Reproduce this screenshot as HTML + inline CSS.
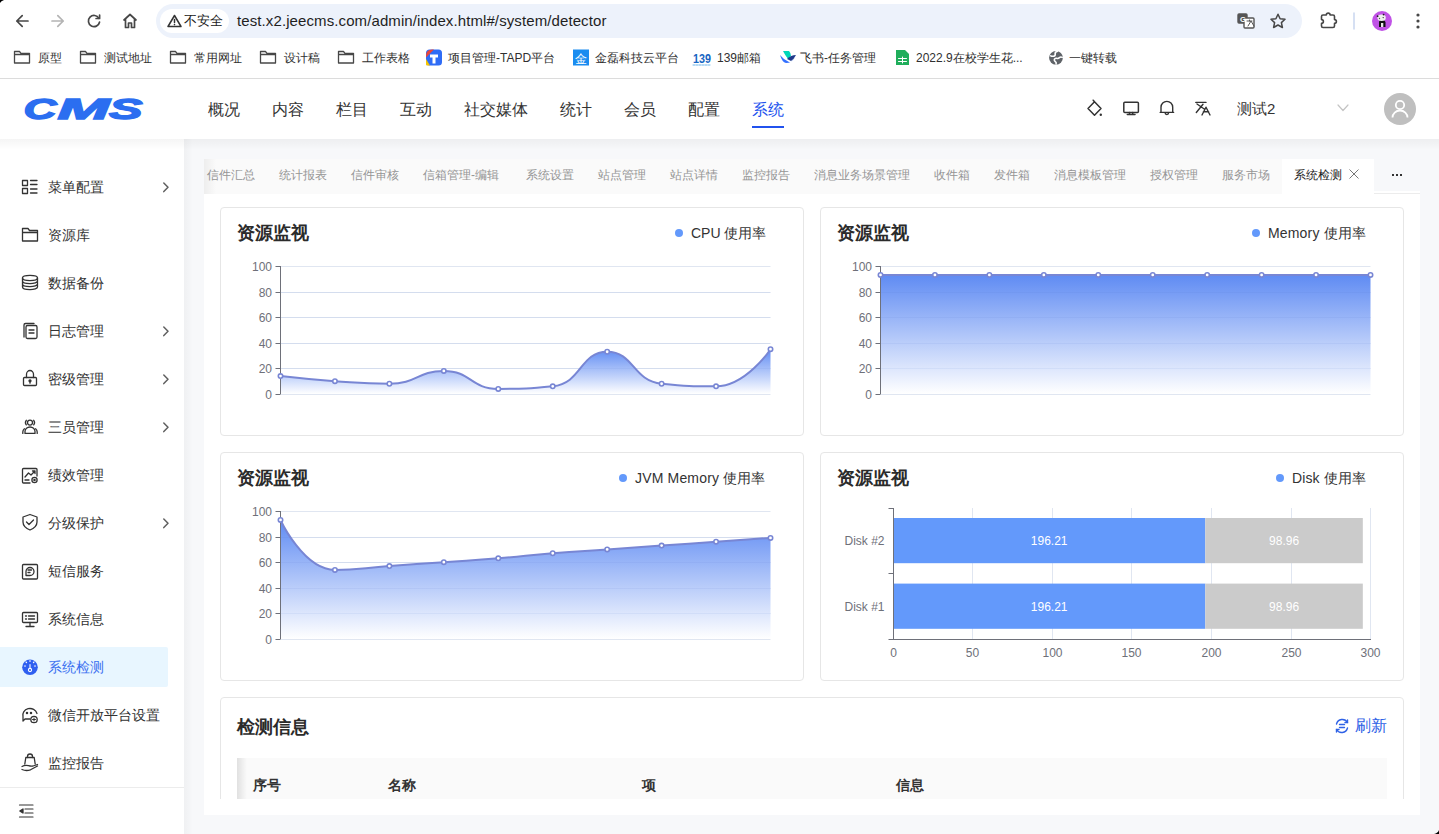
<!DOCTYPE html>
<html><head><meta charset="utf-8"><title>CMS</title>
<style>
*{box-sizing:border-box;margin:0;padding:0}
html,body{width:1439px;height:834px;overflow:hidden}
body{position:relative;background:#f7f8fa;font-family:"Liberation Sans",sans-serif;color:#333}
.a{position:absolute}
.t{position:absolute;white-space:nowrap;line-height:1}
svg{position:absolute;overflow:visible}
.c{display:inline-block;width:1em;text-align:center}
/* browser */
#tb{left:0;top:0;width:1439px;height:78px;background:#fff}
#omni{left:156px;top:4px;width:1146px;height:34px;border-radius:17px;background:#edf2fb}
#chip{left:160px;top:9px;width:69px;height:24px;border-radius:12px;background:#fff}
.bm{font-size:12px;color:#303030;top:52px}
#sep{left:0;top:78px;width:1439px;height:1px;background:#dcdcdc}
/* header */
#hd{left:0;top:79px;width:1439px;height:60px;background:#fff}
.nav{font-size:16px;color:#333;top:102px}
/* sidebar */
#sb{left:0;top:139px;width:184px;height:695px;background:#fff}
.mi{font-size:14px;color:#333;left:48px}
.chev{left:161px}
/* content */
#tabs{left:204px;top:159px;width:1078px;height:35px;background:#fafafa}
.tab{font-size:12px;color:#959595;top:169px}
#panel{left:204px;top:191px;width:1216px;height:624px;background:#fff}
.card{position:absolute;background:#fff;border:1px solid #e6e6e6;border-radius:4px}
.ctitle{font-size:18px;font-weight:bold;color:#2b2b2b;left:16px;top:16px}
.leg{font-size:14px;color:#333}
.ax{font-size:12px;fill:#6e7079;font-family:"Liberation Sans",sans-serif}
</style></head>
<body>
<!-- ============ BROWSER CHROME ============ -->
<div id="tb" class="a"></div>
<div id="omni" class="a"></div>
<div id="chip" class="a"></div>
<svg width="1439" height="78" style="left:0;top:0" fill="none" stroke-linecap="round" stroke-linejoin="round">
 <g stroke="#474747" stroke-width="1.7">
  <path d="M16.8,21 H28 M22.2,15.6 L16.8,21 L22.2,26.4"/>
 </g>
 <g stroke="#b4b4b4" stroke-width="1.7"><path d="M52,21 H63.2 M57.8,15.6 L63.2,21 L57.8,26.4"/></g>
 <g stroke="#474747" stroke-width="1.7">
  <path d="M98.9,18.3 A5.6,5.6 0 1 0 99.5,22.2"/>
  <path d="M99.6,15 V18.5 H96.1" />
  <path d="M124,20 L130,14.5 L136,20 M125.5,18.8 V27.5 H128.5 V23 H131.5 V27.5 H134.5 V18.8"/>
 </g>
 <g stroke="#333" stroke-width="1.5"><path d="M174.5,15.5 L181,26.5 H168 Z"/><path d="M174.5,19.5 V22.5"/></g>
 <circle cx="174.5" cy="24.6" r="0.8" fill="#333"/>
 <!-- translate icon -->
 <g stroke="#555" stroke-width="1.4"><rect x="1238" y="14" width="9" height="9" rx="1" fill="#555"/><rect x="1244" y="18" width="10" height="10" rx="1" fill="#fff"/></g>
 <text x="1240" y="21.5" font-size="7.5" fill="#fff" font-family="Liberation Sans" font-weight="bold">G</text>
 <path d="M1247,21 h5 M1249.5,20 v1 M1248,26 l3,-5 l3,5" stroke="#555" stroke-width="1" />
 <!-- star -->
 <path d="M1278,14.3 L1280.1,18.8 L1285,19.3 L1281.4,22.6 L1282.4,27.5 L1278,25 L1273.6,27.5 L1274.6,22.6 L1271,19.3 L1275.9,18.8 Z" stroke="#474747" stroke-width="1.5"/>
 <!-- puzzle -->
 <path d="M1321.5,16.5 a1.5,1.5 0 0 1 1.5,-1.5 H1326.3 a1.9,1.9 0 0 1 3.8,0 H1333 a1.5,1.5 0 0 1 1.5,1.5 V19.6 a1.9,1.9 0 0 1 0,3.8 V26 a1.5,1.5 0 0 1 -1.5,1.5 H1323 a1.5,1.5 0 0 1 -1.5,-1.5 V23.4 a1.9,1.9 0 0 0 0,-3.8 Z" stroke="#474747" stroke-width="1.6"/>
 <path d="M1354,13 V29" stroke="#c9d6ef" stroke-width="1.5"/>
 <circle cx="1382" cy="21" r="10" fill="#c052e6"/>
 <path d="M1379,27 v-5 q0,-2 3,-2.3 q3,0.3 3.5,2.3 v5 z" fill="#111"/>
 <path d="M1381,27 v-4 h2.3 v4 z" fill="#e8e8e8"/>
 <ellipse cx="1381.6" cy="17.8" rx="4.2" ry="3.2" fill="#eef2ee"/>
 <circle cx="1377.6" cy="16.2" r="0.9" fill="#222"/><circle cx="1383.6" cy="14.6" r="0.9" fill="#222"/>
 <circle cx="1379.5" cy="18.5" r="0.7" fill="#555"/><circle cx="1383.2" cy="17.6" r="0.7" fill="#333"/>
 <g fill="#474747"><circle cx="1418" cy="15" r="1.6"/><circle cx="1418" cy="21" r="1.6"/><circle cx="1418" cy="27" r="1.6"/></g>
 <!-- bookmark folders -->
 <g stroke="#474747" stroke-width="1.3">
  <path d="M14.5,51.5 h5 l1.5,1.8 h8.5 v9.7 h-15 z M14.5,54.5 h15"/>
  <path d="M80.5,51.5 h5 l1.5,1.8 h8.5 v9.7 h-15 z M80.5,54.5 h15"/>
  <path d="M170.5,51.5 h5 l1.5,1.8 h8.5 v9.7 h-15 z M170.5,54.5 h15"/>
  <path d="M260.5,51.5 h5 l1.5,1.8 h8.5 v9.7 h-15 z M260.5,54.5 h15"/>
  <path d="M338.5,51.5 h5 l1.5,1.8 h8.5 v9.7 h-15 z M338.5,54.5 h15"/>
 </g>
 <!-- TAPD -->
 <rect x="426" y="49.5" width="16" height="16" rx="3.5" fill="#2f6cf6"/>
 <path d="M426,62 v-3 l4,6.5 h-3 a1,1 0 0 1 -1,-1z" fill="#f5c400"/>
 <path d="M426,56 q0,-6.5 6,-6.5 h2 l-8,8z" fill="#e8453c"/>
 <path d="M430,54.5 h8 v3 h-2.5 v6 h-3 v-6 h-2.5z" fill="#fff" stroke="none"/>
 <!-- jin -->
 <rect x="573" y="49.5" width="16" height="16" fill="#1a8cf0"/>
 <text x="575" y="62.5" font-size="12" fill="#fff">金</text>
 <!-- 139 -->
 <text x="693" y="63" font-size="12" font-weight="bold" fill="#1765c2" font-family="Liberation Sans" textLength="18" lengthAdjust="spacingAndGlyphs">139</text>
 <path d="M693,65 h18" stroke="#6fb5e9" stroke-width="1" stroke-dasharray="2,1"/>
 <!-- feishu -->
 <path d="M780,55 q4,5 9,7 q4,0 6,-5 q-3,6 -9,6 q-4,-1 -6,-8z" fill="#3370ff"/>
 <path d="M783,51 h6 q2,2 2,5 l-3,3 q-3,-4 -5,-8z" fill="#00d6b9"/>
 <path d="M787,59 q4,-4 9,-4 q-2,4 -5,6z" fill="#1e3a8a"/>
 <!-- sheets -->
 <path d="M896,50 h9 l4,4 v11 h-13z" fill="#1fae5b"/>
 <path d="M898.5,58.5 h8 M898.5,61.5 h8 M902.5,57 v6" stroke="#fff" stroke-width="1"/>
 <!-- globe -->
 <circle cx="1056" cy="57.8" r="6.9" fill="#5f6368"/>
 <path d="M1057.5,51.3 q-2.8,0.8 -2.3,2.8 q0.4,1.6 -1.6,2.1 q-2,0.3 -2.8,-0.4 M1062.2,57.4 q-1.5,-0.9 -2.8,0.2 q-1.2,1.3 -2.8,0.7 q-1.6,-0.4 -2.2,1 q-0.4,1.4 0.8,2.2 q1.4,0.8 0.9,2.4" stroke="#fff" stroke-width="1.6" fill="none"/>
</svg>
<div class="t" style="left:184px;top:14px;font-size:13px;color:#222"><span class="c">不</span><span class="c">安</span><span class="c">全</span></div>
<div class="t" style="left:237px;top:13px;font-size:15px;color:#1f1f1f;letter-spacing:0.1px">test.x2.jeecms.com/admin/index.html#/system/detector</div>
<div class="t bm" style="left:38px"><span class="c">原</span><span class="c">型</span></div>
<div class="t bm" style="left:104px"><span class="c">测</span><span class="c">试</span><span class="c">地</span><span class="c">址</span></div>
<div class="t bm" style="left:194px"><span class="c">常</span><span class="c">用</span><span class="c">网</span><span class="c">址</span></div>
<div class="t bm" style="left:284px"><span class="c">设</span><span class="c">计</span><span class="c">稿</span></div>
<div class="t bm" style="left:362px"><span class="c">工</span><span class="c">作</span><span class="c">表</span><span class="c">格</span></div>
<div class="t bm" style="left:448px"><span class="c">项</span><span class="c">目</span><span class="c">管</span><span class="c">理</span>-TAPD<span class="c">平</span><span class="c">台</span></div>
<div class="t bm" style="left:595px"><span class="c">金</span><span class="c">磊</span><span class="c">科</span><span class="c">技</span><span class="c">云</span><span class="c">平</span><span class="c">台</span></div>
<div class="t bm" style="left:717px">139<span class="c">邮</span><span class="c">箱</span></div>
<div class="t bm" style="left:800px"><span class="c">飞</span><span class="c">书</span>-<span class="c">任</span><span class="c">务</span><span class="c">管</span><span class="c">理</span></div>
<div class="t bm" style="left:916px">2022.9<span class="c">在</span><span class="c">校</span><span class="c">学</span><span class="c">生</span><span class="c">花</span>...</div>
<div class="t bm" style="left:1069px"><span class="c">一</span><span class="c">键</span><span class="c">转</span><span class="c">载</span></div>
<div id="sep" class="a"></div>

<!-- ============ APP HEADER ============ -->
<div id="hd" class="a"></div>
<svg width="140" height="40" style="left:1px;top:89px">
 <g font-family="Liberation Sans" font-weight="bold" font-style="italic" font-size="30" fill="#2b6ef0" stroke="#2b6ef0" stroke-width="1.4">
 <text x="22.5" y="30" textLength="33" lengthAdjust="spacingAndGlyphs">C</text>
 <text x="56.5" y="30" textLength="52" lengthAdjust="spacingAndGlyphs">M</text>
 <text x="108" y="30" textLength="33.5" lengthAdjust="spacingAndGlyphs">S</text>
 </g>
</svg>
<div class="t nav" style="left:208px"><span class="c">概</span><span class="c">况</span></div>
<div class="t nav" style="left:272px"><span class="c">内</span><span class="c">容</span></div>
<div class="t nav" style="left:336px"><span class="c">栏</span><span class="c">目</span></div>
<div class="t nav" style="left:400px"><span class="c">互</span><span class="c">动</span></div>
<div class="t nav" style="left:464px"><span class="c">社</span><span class="c">交</span><span class="c">媒</span><span class="c">体</span></div>
<div class="t nav" style="left:560px"><span class="c">统</span><span class="c">计</span></div>
<div class="t nav" style="left:624px"><span class="c">会</span><span class="c">员</span></div>
<div class="t nav" style="left:688px"><span class="c">配</span><span class="c">置</span></div>
<div class="t nav" style="left:752px;color:#2152ee"><span class="c">系</span><span class="c">统</span></div>
<div class="a" style="left:752px;top:126px;width:32px;height:2px;background:#2152ee"></div>
<svg width="1439" height="60" style="left:0;top:79px" fill="none" stroke="#333" stroke-width="1.5" stroke-linejoin="round" stroke-linecap="round">
 <!-- paint bucket -->
 <path d="M1094.5,22.8 L1101,29.6 L1094.5,36.3 L1088,29.6 Z M1094.5,22.8 L1093.2,21.2"/>
 <circle cx="1100.8" cy="35.8" r="1.2" fill="#333" stroke="none"/>
 <!-- monitor -->
 <rect x="1123.8" y="23.2" width="14.6" height="10.2" rx="1"/>
 <path d="M1129.5,33.5 V35.3 M1132.7,33.5 V35.3 M1127.3,35.6 H1135"/>
 <!-- bell -->
 <path d="M1161,33.4 V28.2 a5.85,5.85 0 0 1 11.7,0 V33.4 M1160.2,33.4 H1173.6 M1165.1,33.8 a1.75,1.75 0 0 0 3.5,0" stroke-width="1.4"/>
 <!-- translate -->
 <path d="M1195.8,23.4 H1206 M1197,25 L1204.6,30.3 M1203,25.3 L1196.3,33.5 M1202,36 L1206,28.2 L1210,36 M1203.4,32.8 H1208.6" stroke-width="1.4"/>
 <!-- chevron -->
 <path d="M1338,26 L1343,31.5 L1348,26" stroke="#c4c4c4" stroke-width="1.2"/>
</svg>
<div class="t" style="left:1237px;top:101px;font-size:15px;color:#333"><span class="c">测</span><span class="c">试</span>2</div>
<div class="a" style="left:1384px;top:93px;width:32px;height:32px;border-radius:16px;background:#bfbfbf"></div>
<svg width="32" height="32" style="left:1384px;top:93px" fill="none" stroke="#fff" stroke-width="1.8">
 <circle cx="16" cy="12" r="4.2"/>
 <path d="M8.5,24.5 a7.5,7 0 0 1 15,0"/>
</svg>

<!-- ============ SIDEBAR ============ -->
<div id="sb" class="a"></div>
<div class="a" style="left:0;top:647px;width:168px;height:40px;background:#e8f6ff;border-radius:0 2px 2px 0"></div>
<div class="t mi" style="top:180px"><span class="c">菜</span><span class="c">单</span><span class="c">配</span><span class="c">置</span></div>
<div class="t mi" style="top:228px"><span class="c">资</span><span class="c">源</span><span class="c">库</span></div>
<div class="t mi" style="top:276px"><span class="c">数</span><span class="c">据</span><span class="c">备</span><span class="c">份</span></div>
<div class="t mi" style="top:324px"><span class="c">日</span><span class="c">志</span><span class="c">管</span><span class="c">理</span></div>
<div class="t mi" style="top:372px"><span class="c">密</span><span class="c">级</span><span class="c">管</span><span class="c">理</span></div>
<div class="t mi" style="top:420px"><span class="c">三</span><span class="c">员</span><span class="c">管</span><span class="c">理</span></div>
<div class="t mi" style="top:468px"><span class="c">绩</span><span class="c">效</span><span class="c">管</span><span class="c">理</span></div>
<div class="t mi" style="top:516px"><span class="c">分</span><span class="c">级</span><span class="c">保</span><span class="c">护</span></div>
<div class="t mi" style="top:564px"><span class="c">短</span><span class="c">信</span><span class="c">服</span><span class="c">务</span></div>
<div class="t mi" style="top:612px"><span class="c">系</span><span class="c">统</span><span class="c">信</span><span class="c">息</span></div>
<div class="t mi" style="top:660px;color:#3a6ff0"><span class="c">系</span><span class="c">统</span><span class="c">检</span><span class="c">测</span></div>
<div class="t mi" style="top:708px"><span class="c">微</span><span class="c">信</span><span class="c">开</span><span class="c">放</span><span class="c">平</span><span class="c">台</span><span class="c">设</span><span class="c">置</span></div>
<div class="t mi" style="top:756px"><span class="c">监</span><span class="c">控</span><span class="c">报</span><span class="c">告</span></div>
<div class="a" style="left:0;top:787px;width:184px;height:1px;background:#ececec"></div>
<svg width="184" height="695" style="left:0;top:139px" fill="none" stroke="#333" stroke-width="1.3" stroke-linejoin="round" stroke-linecap="round">
 <!-- chevrons -->
 <g stroke="#606060" stroke-width="1.5">
  <path d="M163.8,44 L168,48.3 L163.8,52.6"/>
  <path d="M163.8,188 L168,192.3 L163.8,196.6"/>
  <path d="M163.8,236 L168,240.3 L163.8,244.6"/>
  <path d="M163.8,284 L168,288.3 L163.8,292.6"/>
  <path d="M163.8,380 L168,384.3 L163.8,388.6"/>
 </g>
 <!-- menu config: y 41-55 -->
 <rect x="22.5" y="41.5" width="5" height="5"/><rect x="22.5" y="49.5" width="5" height="5"/>
 <path d="M30.5,41.5 H37 M30.5,45.5 H37 M30.5,50 H37 M30.5,54 H37"/>
 <!-- folder: y 89-102 -->
 <path d="M22.5,89.5 H28 L29.5,91.5 H37.5 V102 H22.5 Z M22.5,93.5 H37.5"/>
 <!-- database: y 136-151 -->
 <ellipse cx="30" cy="139" rx="7.5" ry="2.6"/>
 <path d="M22.5,139 V148 a7.5,2.6 0 0 0 15,0 V139 M22.5,142 a7.5,2.6 0 0 0 15,0 M22.5,145 a7.5,2.6 0 0 0 15,0"/>
 <!-- log stacked docs: y 184-199 -->
 <path d="M24,198 V186 a1.5,1.5 0 0 1 1.5,-1.5 H34"/>
 <rect x="26" y="186.5" width="11" height="13" rx="1.5"/>
 <path d="M29,191 H34 M29,194 H34"/>
 <!-- lock -->
 <path d="M26.5,238.5 V235.2 a3.5,3.7 0 0 1 7,0 V238.5"/>
 <rect x="23.5" y="238.5" width="13" height="8" rx="1"/>
 <circle cx="30" cy="241.8" r="1" fill="#333"/><path d="M30,242.3 V244.2"/>
 <!-- users -->
 <circle cx="30" cy="283.6" r="2.5"/>
 <path d="M25,294.4 V292.6 a5,4.6 0 0 1 10,0 V294.4 Z"/>
 <path d="M26.3,281.3 q-1.8,2.3 0,4.6 M33.7,281.3 q1.8,2.3 0,4.6 M22.8,294.4 V293 q0,-2 1.6,-3.2 M37.2,294.4 V293 q0,-2 -1.6,-3.2"/>
 <!-- performance: y 329-344 -->
 <path d="M37,337 V330.5 a1,1 0 0 0 -1,-1 H23.5 a1,1 0 0 0 -1,1 V343 a1,1 0 0 0 1,1 H30"/>
 <path d="M25,338 L28.5,334 L31,336 L35,332 M32.5,332 H35 V334.5 M25,341 H29"/>
 <circle cx="34.5" cy="341" r="2.6"/><circle cx="34.5" cy="341" r="0.6" fill="#333"/>
 <!-- shield: y 377-393 -->
 <path d="M30,375.5 L37,378 V383 q0,5 -7,8 q-7,-3 -7,-8 V378 Z"/>
 <path d="M26.5,383 L29,385.5 L33.5,381"/>
 <!-- sms: y 425-440 -->
 <rect x="22.5" y="425.5" width="15" height="14.5" rx="1"/>
 <path d="M26,436.5 V432.5 a4,4 0 1 1 4,4 Z M28,431 H31.5 M28,433.5 H30"/>
 <!-- system info: y 473-488 -->
 <rect x="22.5" y="473.5" width="15" height="10" rx="1"/>
 <path d="M30,483.5 V486.5 M26,487.5 H34 M25.5,477 H26.5 M25.5,480 H26.5 M28.5,477 H34.5 M28.5,480 H34.5"/>
 <!-- detector active: y 520-536 -->
 <circle cx="30" cy="528.3" r="7.8" fill="#2f5ff0" stroke="none"/>
 <g stroke="#fff" stroke-width="1.1"><circle cx="30" cy="531" r="1.6"/><path d="M30,529.5 V525.5 M30,521.5 V522.5 M24.5,527 H25.5 M34.5,527 H35.5 M26,523 L26.6,523.6 M34,523 L33.4,523.6"/></g>
 <!-- wechat: y 568-584 -->
 <path d="M30,580 H25 L23,582 V578 a7,6.5 0 1 1 14,-3.5"/>
 <circle cx="27" cy="574" r="0.6" fill="#333"/><circle cx="31" cy="574" r="0.6" fill="#333"/>
 <circle cx="34" cy="580.5" r="3.2"/><path d="M34,579 V582 M32.5,580.5 H35.5" stroke-width="1"/>
 <!-- monitor report -->
 <path d="M24.8,625 L25.8,618.5 H34.2 L35.2,625"/>
 <path d="M27.5,618.5 V617.5 a2.5,2.5 0 0 1 5,0 V618.5"/>
 <path d="M22,627.5 q3,-1.8 6.5,-0.8 q2.5,0.8 4.5,0.3 l4.5,-1.5 M22,630.5 q4,1.8 8.5,0.3 l7,-3.8"/>
 <!-- collapse icon: y 665-679 -->
 <path d="M19.5,666 H33 M25,670 H33 M25,674 H33 M19.5,678 H33" stroke-width="1.2"/>
 <path d="M23,670 L19.8,672 L23,674 Z" fill="#333"/>
</svg>

<!-- ============ CONTENT ============ -->
<div id="panel" class="a"></div>
<div id="tabs" class="a"></div>
<!-- TABS_CONTENT -->
<div class="a" style="left:1282px;top:159px;width:92px;height:35px;background:#fff"></div>
<div class="a" style="left:1374px;top:193px;width:46px;height:1px;background:#ececec"></div>
<div class="t tab" style="left:207px"><span class="c">信</span><span class="c">件</span><span class="c">汇</span><span class="c">总</span></div>
<div class="t tab" style="left:279px"><span class="c">统</span><span class="c">计</span><span class="c">报</span><span class="c">表</span></div>
<div class="t tab" style="left:351px"><span class="c">信</span><span class="c">件</span><span class="c">审</span><span class="c">核</span></div>
<div class="t tab" style="left:423px"><span class="c">信</span><span class="c">箱</span><span class="c">管</span><span class="c">理</span>-<span class="c">编</span><span class="c">辑</span></div>
<div class="t tab" style="left:526px"><span class="c">系</span><span class="c">统</span><span class="c">设</span><span class="c">置</span></div>
<div class="t tab" style="left:598px"><span class="c">站</span><span class="c">点</span><span class="c">管</span><span class="c">理</span></div>
<div class="t tab" style="left:670px"><span class="c">站</span><span class="c">点</span><span class="c">详</span><span class="c">情</span></div>
<div class="t tab" style="left:742px"><span class="c">监</span><span class="c">控</span><span class="c">报</span><span class="c">告</span></div>
<div class="t tab" style="left:814px"><span class="c">消</span><span class="c">息</span><span class="c">业</span><span class="c">务</span><span class="c">场</span><span class="c">景</span><span class="c">管</span><span class="c">理</span></div>
<div class="t tab" style="left:934px"><span class="c">收</span><span class="c">件</span><span class="c">箱</span></div>
<div class="t tab" style="left:994px"><span class="c">发</span><span class="c">件</span><span class="c">箱</span></div>
<div class="t tab" style="left:1054px"><span class="c">消</span><span class="c">息</span><span class="c">模</span><span class="c">板</span><span class="c">管</span><span class="c">理</span></div>
<div class="t tab" style="left:1150px"><span class="c">授</span><span class="c">权</span><span class="c">管</span><span class="c">理</span></div>
<div class="t tab" style="left:1222px"><span class="c">服</span><span class="c">务</span><span class="c">市</span><span class="c">场</span></div>
<div class="t tab" style="left:1294px;color:#222"><span class="c">系</span><span class="c">统</span><span class="c">检</span><span class="c">测</span></div>
<div class="a" style="left:204px;top:159px;width:12px;height:35px;background:linear-gradient(90deg,rgba(0,0,0,0.05),rgba(0,0,0,0))"></div>
<svg width="1439" height="40" style="left:0;top:155px" fill="none">
 <path d="M1349.5,14.5 L1358.5,23.5 M1358.5,14.5 L1349.5,23.5" stroke="#777" stroke-width="1"/>
 <g fill="#333"><rect x="1392" y="19" width="2" height="2"/><rect x="1396" y="19" width="2" height="2"/><rect x="1400" y="19" width="2" height="2"/></g>
</svg>
<!-- cards -->
<div class="card" style="left:220px;top:207px;width:584px;height:229px"></div>
<div class="card" style="left:820px;top:207px;width:584px;height:229px"></div>
<div class="card" style="left:220px;top:452px;width:584px;height:229px"></div>
<div class="card" style="left:820px;top:452px;width:584px;height:229px"></div>
<div class="a" style="left:220px;top:697px;width:1184px;height:102px;overflow:hidden">
 <div class="card" style="left:0;top:0;width:1184px;height:300px"></div>
</div>
<div class="t" style="left:237px;top:224px;font-size:18px;font-weight:bold;color:#2b2b2b"><span class="c">资</span><span class="c">源</span><span class="c">监</span><span class="c">视</span></div>
<div class="t" style="left:837px;top:224px;font-size:18px;font-weight:bold;color:#2b2b2b"><span class="c">资</span><span class="c">源</span><span class="c">监</span><span class="c">视</span></div>
<div class="t" style="left:237px;top:469px;font-size:18px;font-weight:bold;color:#2b2b2b"><span class="c">资</span><span class="c">源</span><span class="c">监</span><span class="c">视</span></div>
<div class="t" style="left:837px;top:469px;font-size:18px;font-weight:bold;color:#2b2b2b"><span class="c">资</span><span class="c">源</span><span class="c">监</span><span class="c">视</span></div>
<div class="a" style="left:675px;top:229px;width:8px;height:8px;border-radius:4px;background:#6399fb"></div>
<div class="t leg" style="left:691px;top:226px">CPU <span class="c">使</span><span class="c">用</span><span class="c">率</span></div>
<div class="a" style="left:1252px;top:229px;width:8px;height:8px;border-radius:4px;background:#6399fb"></div>
<div class="t leg" style="left:1268px;top:226px;letter-spacing:0.17px">Memory <span class="c">使</span><span class="c">用</span><span class="c">率</span></div>
<div class="a" style="left:619px;top:474px;width:8px;height:8px;border-radius:4px;background:#6399fb"></div>
<div class="t leg" style="left:635px;top:471px;letter-spacing:0.17px">JVM Memory <span class="c">使</span><span class="c">用</span><span class="c">率</span></div>
<div class="a" style="left:1276px;top:474px;width:8px;height:8px;border-radius:4px;background:#6399fb"></div>
<div class="t leg" style="left:1292px;top:471px;letter-spacing:0.1px">Disk <span class="c">使</span><span class="c">用</span><span class="c">率</span></div>
<!-- CHARTS_START -->
<svg width="1439" height="834" style="left:0;top:0" fill="none">
<defs><linearGradient id="g1" x1="0" y1="0" x2="0" y2="1"><stop offset="0" stop-color="#5f8bf3"/><stop offset="1" stop-color="#ffffff"/></linearGradient></defs>
<path d="M280.5,394.5 H770.5" stroke="#e0e6f1" stroke-width="1"/>
<path d="M280.5,368.5 H770.5" stroke="#e0e6f1" stroke-width="1"/>
<path d="M280.5,343.5 H770.5" stroke="#e0e6f1" stroke-width="1"/>
<path d="M280.5,317.5 H770.5" stroke="#e0e6f1" stroke-width="1"/>
<path d="M280.5,292.5 H770.5" stroke="#e0e6f1" stroke-width="1"/>
<path d="M280.5,266.5 H770.5" stroke="#e0e6f1" stroke-width="1"/>
<path d="M280.50,376.08 C280.50,376.08 307.68,379.28 334.94,381.20 C362.12,383.12 362.52,383.76 389.39,383.76 C416.96,383.76 416.94,370.96 443.83,370.96 C471.39,370.96 470.37,388.88 498.28,388.88 C524.82,388.88 527.78,388.88 552.72,386.32 C582.23,383.29 579.66,351.76 607.17,351.76 C634.10,351.76 632.39,380.79 661.61,383.76 C686.83,386.32 691.41,386.32 716.06,386.32 C745.85,386.32 770.50,349.20 770.50,349.20 L770.5,394.0 L280.5,394.0 Z" fill="url(#g1)"/>
<path d="M280.5,368.5 H770.5" stroke="#5070d0" stroke-opacity="0.08" stroke-width="1"/>
<path d="M280.5,343.5 H770.5" stroke="#5070d0" stroke-opacity="0.08" stroke-width="1"/>
<path d="M280.5,317.5 H770.5" stroke="#5070d0" stroke-opacity="0.08" stroke-width="1"/>
<path d="M280.5,292.5 H770.5" stroke="#5070d0" stroke-opacity="0.08" stroke-width="1"/>
<path d="M280.5,266.0 V394.0" stroke="#6e7079" stroke-width="1"/>
<path d="M275.5,394.5 H280.5" stroke="#6e7079" stroke-width="1"/>
<text x="272.0" y="398.7" text-anchor="end" class="ax">0</text>
<path d="M275.5,368.5 H280.5" stroke="#6e7079" stroke-width="1"/>
<text x="272.0" y="372.7" text-anchor="end" class="ax">20</text>
<path d="M275.5,343.5 H280.5" stroke="#6e7079" stroke-width="1"/>
<text x="272.0" y="347.7" text-anchor="end" class="ax">40</text>
<path d="M275.5,317.5 H280.5" stroke="#6e7079" stroke-width="1"/>
<text x="272.0" y="321.7" text-anchor="end" class="ax">60</text>
<path d="M275.5,292.5 H280.5" stroke="#6e7079" stroke-width="1"/>
<text x="272.0" y="296.7" text-anchor="end" class="ax">80</text>
<path d="M275.5,266.5 H280.5" stroke="#6e7079" stroke-width="1"/>
<text x="272.0" y="270.7" text-anchor="end" class="ax">100</text>
<path d="M280.50,376.08 C280.50,376.08 307.68,379.28 334.94,381.20 C362.12,383.12 362.52,383.76 389.39,383.76 C416.96,383.76 416.94,370.96 443.83,370.96 C471.39,370.96 470.37,388.88 498.28,388.88 C524.82,388.88 527.78,388.88 552.72,386.32 C582.23,383.29 579.66,351.76 607.17,351.76 C634.10,351.76 632.39,380.79 661.61,383.76 C686.83,386.32 691.41,386.32 716.06,386.32 C745.85,386.32 770.50,349.20 770.50,349.20" fill="none" stroke="#7886d4" stroke-width="2"/>
<circle cx="280.50" cy="376.08" r="2.2" fill="#fff" stroke="#7886d4" stroke-width="1.6"/>
<circle cx="334.94" cy="381.20" r="2.2" fill="#fff" stroke="#7886d4" stroke-width="1.6"/>
<circle cx="389.39" cy="383.76" r="2.2" fill="#fff" stroke="#7886d4" stroke-width="1.6"/>
<circle cx="443.83" cy="370.96" r="2.2" fill="#fff" stroke="#7886d4" stroke-width="1.6"/>
<circle cx="498.28" cy="388.88" r="2.2" fill="#fff" stroke="#7886d4" stroke-width="1.6"/>
<circle cx="552.72" cy="386.32" r="2.2" fill="#fff" stroke="#7886d4" stroke-width="1.6"/>
<circle cx="607.17" cy="351.76" r="2.2" fill="#fff" stroke="#7886d4" stroke-width="1.6"/>
<circle cx="661.61" cy="383.76" r="2.2" fill="#fff" stroke="#7886d4" stroke-width="1.6"/>
<circle cx="716.06" cy="386.32" r="2.2" fill="#fff" stroke="#7886d4" stroke-width="1.6"/>
<circle cx="770.50" cy="349.20" r="2.2" fill="#fff" stroke="#7886d4" stroke-width="1.6"/>
<defs><linearGradient id="g2" x1="0" y1="0" x2="0" y2="1"><stop offset="0" stop-color="#5f8bf3"/><stop offset="1" stop-color="#ffffff"/></linearGradient></defs>
<path d="M880.5,394.5 H1370.5" stroke="#e0e6f1" stroke-width="1"/>
<path d="M880.5,368.5 H1370.5" stroke="#e0e6f1" stroke-width="1"/>
<path d="M880.5,343.5 H1370.5" stroke="#e0e6f1" stroke-width="1"/>
<path d="M880.5,317.5 H1370.5" stroke="#e0e6f1" stroke-width="1"/>
<path d="M880.5,292.5 H1370.5" stroke="#e0e6f1" stroke-width="1"/>
<path d="M880.5,266.5 H1370.5" stroke="#e0e6f1" stroke-width="1"/>
<path d="M880.50,274.96 C880.50,274.96 907.72,274.96 934.94,274.96 C962.17,274.96 962.17,274.96 989.39,274.96 C1016.61,274.96 1016.61,274.96 1043.83,274.96 C1071.06,274.96 1071.06,274.96 1098.28,274.96 C1125.50,274.96 1125.50,274.96 1152.72,274.96 C1179.94,274.96 1179.94,274.96 1207.17,274.96 C1234.39,274.96 1234.39,274.96 1261.61,274.96 C1288.83,274.96 1288.83,274.96 1316.06,274.96 C1343.28,274.96 1370.50,274.96 1370.50,274.96 L1370.5,394.0 L880.5,394.0 Z" fill="url(#g2)"/>
<path d="M880.5,368.5 H1370.5" stroke="#5070d0" stroke-opacity="0.08" stroke-width="1"/>
<path d="M880.5,343.5 H1370.5" stroke="#5070d0" stroke-opacity="0.08" stroke-width="1"/>
<path d="M880.5,317.5 H1370.5" stroke="#5070d0" stroke-opacity="0.08" stroke-width="1"/>
<path d="M880.5,292.5 H1370.5" stroke="#5070d0" stroke-opacity="0.08" stroke-width="1"/>
<path d="M880.5,266.0 V394.0" stroke="#6e7079" stroke-width="1"/>
<path d="M875.5,394.5 H880.5" stroke="#6e7079" stroke-width="1"/>
<text x="872.0" y="398.7" text-anchor="end" class="ax">0</text>
<path d="M875.5,368.5 H880.5" stroke="#6e7079" stroke-width="1"/>
<text x="872.0" y="372.7" text-anchor="end" class="ax">20</text>
<path d="M875.5,343.5 H880.5" stroke="#6e7079" stroke-width="1"/>
<text x="872.0" y="347.7" text-anchor="end" class="ax">40</text>
<path d="M875.5,317.5 H880.5" stroke="#6e7079" stroke-width="1"/>
<text x="872.0" y="321.7" text-anchor="end" class="ax">60</text>
<path d="M875.5,292.5 H880.5" stroke="#6e7079" stroke-width="1"/>
<text x="872.0" y="296.7" text-anchor="end" class="ax">80</text>
<path d="M875.5,266.5 H880.5" stroke="#6e7079" stroke-width="1"/>
<text x="872.0" y="270.7" text-anchor="end" class="ax">100</text>
<path d="M880.50,274.96 C880.50,274.96 907.72,274.96 934.94,274.96 C962.17,274.96 962.17,274.96 989.39,274.96 C1016.61,274.96 1016.61,274.96 1043.83,274.96 C1071.06,274.96 1071.06,274.96 1098.28,274.96 C1125.50,274.96 1125.50,274.96 1152.72,274.96 C1179.94,274.96 1179.94,274.96 1207.17,274.96 C1234.39,274.96 1234.39,274.96 1261.61,274.96 C1288.83,274.96 1288.83,274.96 1316.06,274.96 C1343.28,274.96 1370.50,274.96 1370.50,274.96" fill="none" stroke="#7886d4" stroke-width="2"/>
<circle cx="880.50" cy="274.96" r="2.2" fill="#fff" stroke="#7886d4" stroke-width="1.6"/>
<circle cx="934.94" cy="274.96" r="2.2" fill="#fff" stroke="#7886d4" stroke-width="1.6"/>
<circle cx="989.39" cy="274.96" r="2.2" fill="#fff" stroke="#7886d4" stroke-width="1.6"/>
<circle cx="1043.83" cy="274.96" r="2.2" fill="#fff" stroke="#7886d4" stroke-width="1.6"/>
<circle cx="1098.28" cy="274.96" r="2.2" fill="#fff" stroke="#7886d4" stroke-width="1.6"/>
<circle cx="1152.72" cy="274.96" r="2.2" fill="#fff" stroke="#7886d4" stroke-width="1.6"/>
<circle cx="1207.17" cy="274.96" r="2.2" fill="#fff" stroke="#7886d4" stroke-width="1.6"/>
<circle cx="1261.61" cy="274.96" r="2.2" fill="#fff" stroke="#7886d4" stroke-width="1.6"/>
<circle cx="1316.06" cy="274.96" r="2.2" fill="#fff" stroke="#7886d4" stroke-width="1.6"/>
<circle cx="1370.50" cy="274.96" r="2.2" fill="#fff" stroke="#7886d4" stroke-width="1.6"/>
<defs><linearGradient id="g3" x1="0" y1="0" x2="0" y2="1"><stop offset="0" stop-color="#5f8bf3"/><stop offset="1" stop-color="#ffffff"/></linearGradient></defs>
<path d="M280.5,639.5 H770.5" stroke="#e0e6f1" stroke-width="1"/>
<path d="M280.5,613.5 H770.5" stroke="#e0e6f1" stroke-width="1"/>
<path d="M280.5,588.5 H770.5" stroke="#e0e6f1" stroke-width="1"/>
<path d="M280.5,562.5 H770.5" stroke="#e0e6f1" stroke-width="1"/>
<path d="M280.5,537.5 H770.5" stroke="#e0e6f1" stroke-width="1"/>
<path d="M280.5,511.5 H770.5" stroke="#e0e6f1" stroke-width="1"/>
<path d="M280.50,519.96 C280.50,519.96 303.63,569.88 334.94,569.88 C358.08,569.88 362.17,567.96 389.39,566.04 C416.61,564.12 416.61,564.12 443.83,562.20 C471.06,560.28 471.08,560.60 498.28,558.36 C525.53,556.12 525.47,555.48 552.72,553.24 C579.92,551.00 579.94,551.32 607.17,549.40 C634.39,547.48 634.39,547.48 661.61,545.56 C688.83,543.64 688.83,543.64 716.06,541.72 C743.28,539.80 770.50,537.88 770.50,537.88 L770.5,639.0 L280.5,639.0 Z" fill="url(#g3)"/>
<path d="M280.5,613.5 H770.5" stroke="#5070d0" stroke-opacity="0.08" stroke-width="1"/>
<path d="M280.5,588.5 H770.5" stroke="#5070d0" stroke-opacity="0.08" stroke-width="1"/>
<path d="M280.5,562.5 H770.5" stroke="#5070d0" stroke-opacity="0.08" stroke-width="1"/>
<path d="M280.5,537.5 H770.5" stroke="#5070d0" stroke-opacity="0.08" stroke-width="1"/>
<path d="M280.5,511.0 V639.0" stroke="#6e7079" stroke-width="1"/>
<path d="M275.5,639.5 H280.5" stroke="#6e7079" stroke-width="1"/>
<text x="272.0" y="643.7" text-anchor="end" class="ax">0</text>
<path d="M275.5,613.5 H280.5" stroke="#6e7079" stroke-width="1"/>
<text x="272.0" y="617.7" text-anchor="end" class="ax">20</text>
<path d="M275.5,588.5 H280.5" stroke="#6e7079" stroke-width="1"/>
<text x="272.0" y="592.7" text-anchor="end" class="ax">40</text>
<path d="M275.5,562.5 H280.5" stroke="#6e7079" stroke-width="1"/>
<text x="272.0" y="566.7" text-anchor="end" class="ax">60</text>
<path d="M275.5,537.5 H280.5" stroke="#6e7079" stroke-width="1"/>
<text x="272.0" y="541.7" text-anchor="end" class="ax">80</text>
<path d="M275.5,511.5 H280.5" stroke="#6e7079" stroke-width="1"/>
<text x="272.0" y="515.7" text-anchor="end" class="ax">100</text>
<path d="M280.50,519.96 C280.50,519.96 303.63,569.88 334.94,569.88 C358.08,569.88 362.17,567.96 389.39,566.04 C416.61,564.12 416.61,564.12 443.83,562.20 C471.06,560.28 471.08,560.60 498.28,558.36 C525.53,556.12 525.47,555.48 552.72,553.24 C579.92,551.00 579.94,551.32 607.17,549.40 C634.39,547.48 634.39,547.48 661.61,545.56 C688.83,543.64 688.83,543.64 716.06,541.72 C743.28,539.80 770.50,537.88 770.50,537.88" fill="none" stroke="#7886d4" stroke-width="2"/>
<circle cx="280.50" cy="519.96" r="2.2" fill="#fff" stroke="#7886d4" stroke-width="1.6"/>
<circle cx="334.94" cy="569.88" r="2.2" fill="#fff" stroke="#7886d4" stroke-width="1.6"/>
<circle cx="389.39" cy="566.04" r="2.2" fill="#fff" stroke="#7886d4" stroke-width="1.6"/>
<circle cx="443.83" cy="562.20" r="2.2" fill="#fff" stroke="#7886d4" stroke-width="1.6"/>
<circle cx="498.28" cy="558.36" r="2.2" fill="#fff" stroke="#7886d4" stroke-width="1.6"/>
<circle cx="552.72" cy="553.24" r="2.2" fill="#fff" stroke="#7886d4" stroke-width="1.6"/>
<circle cx="607.17" cy="549.40" r="2.2" fill="#fff" stroke="#7886d4" stroke-width="1.6"/>
<circle cx="661.61" cy="545.56" r="2.2" fill="#fff" stroke="#7886d4" stroke-width="1.6"/>
<circle cx="716.06" cy="541.72" r="2.2" fill="#fff" stroke="#7886d4" stroke-width="1.6"/>
<circle cx="770.50" cy="537.88" r="2.2" fill="#fff" stroke="#7886d4" stroke-width="1.6"/>
<text x="893.5" y="656.9" text-anchor="middle" class="ax">0</text>
<path d="M972.5,508 V639.4" stroke="#e0e6f1" stroke-width="1"/>
<text x="972.5" y="656.9" text-anchor="middle" class="ax">50</text>
<path d="M1052.5,508 V639.4" stroke="#e0e6f1" stroke-width="1"/>
<text x="1052.5" y="656.9" text-anchor="middle" class="ax">100</text>
<path d="M1131.5,508 V639.4" stroke="#e0e6f1" stroke-width="1"/>
<text x="1131.5" y="656.9" text-anchor="middle" class="ax">150</text>
<path d="M1211.5,508 V639.4" stroke="#e0e6f1" stroke-width="1"/>
<text x="1211.5" y="656.9" text-anchor="middle" class="ax">200</text>
<path d="M1291.5,508 V639.4" stroke="#e0e6f1" stroke-width="1"/>
<text x="1291.5" y="656.9" text-anchor="middle" class="ax">250</text>
<path d="M1370.5,508 V639.4" stroke="#e0e6f1" stroke-width="1"/>
<text x="1370.5" y="656.9" text-anchor="middle" class="ax">300</text>
<rect x="893.0" y="518.0" width="312.30" height="45.2" fill="#6399fb"/>
<rect x="1205.30" y="518.0" width="157.51" height="45.2" fill="#cbcbcb"/>
<text x="1049.2" y="545.0" text-anchor="middle" class="ax" style="fill:#fff">196.21</text>
<text x="1284.1" y="545.0" text-anchor="middle" class="ax" style="fill:#fff">98.96</text>
<text x="884.5" y="545.0" text-anchor="end" class="ax">Disk #2</text>
<rect x="893.0" y="583.6" width="312.30" height="45.2" fill="#6399fb"/>
<rect x="1205.30" y="583.6" width="157.51" height="45.2" fill="#cbcbcb"/>
<text x="1049.2" y="610.6" text-anchor="middle" class="ax" style="fill:#fff">196.21</text>
<text x="1284.1" y="610.6" text-anchor="middle" class="ax" style="fill:#fff">98.96</text>
<text x="884.5" y="610.6" text-anchor="end" class="ax">Disk #1</text>
<path d="M893.5,508 V639.4" stroke="#6e7079" stroke-width="1"/>
<path d="M888.5,639.5 H1371" stroke="#6e7079" stroke-width="1"/>
<path d="M888.5,508.5 H893.5" stroke="#6e7079" stroke-width="1"/>
<path d="M888.5,573.5 H893.5" stroke="#6e7079" stroke-width="1"/>
</svg>
<!-- CHARTS_END -->
<!-- detection card -->
<div class="t" style="left:237px;top:718px;font-size:18px;font-weight:bold;color:#2b2b2b"><span class="c">检</span><span class="c">测</span><span class="c">信</span><span class="c">息</span></div>
<svg width="20" height="20" style="left:1332px;top:716px" fill="none" stroke="#2f62e6" stroke-width="1.4" stroke-linecap="round">
 <path d="M4.5,8 a6,6 0 0 1 11,-1.5 M15.5,12 a6,6 0 0 1 -11,1.5"/>
 <path d="M7.5,8.5 H12.5 M7.5,11.5 H12.5"/>
 <path d="M15.5,4 V6.5 H13" /><path d="M4.5,16 V13.5 H7"/>
</svg>
<div class="t" style="left:1355px;top:718px;font-size:16px;color:#2f62e6"><span class="c">刷</span><span class="c">新</span></div>
<div class="a" style="left:237px;top:758px;width:1150px;height:41px;background:#fafafa"></div>
<div class="a" style="left:237px;top:758px;width:10px;height:41px;background:linear-gradient(90deg,rgba(0,0,0,0.1),rgba(0,0,0,0))"></div>
<div class="t" style="left:253px;top:778px;font-size:14px;font-weight:bold;color:#333"><span class="c">序</span><span class="c">号</span></div>
<div class="t" style="left:388px;top:778px;font-size:14px;font-weight:bold;color:#333"><span class="c">名</span><span class="c">称</span></div>
<div class="t" style="left:642px;top:778px;font-size:14px;font-weight:bold;color:#333"><span class="c">项</span></div>
<div class="t" style="left:896px;top:778px;font-size:14px;font-weight:bold;color:#333"><span class="c">信</span><span class="c">息</span></div>

<!-- CARDS_END -->
<svg width="1439" height="834" style="left:0;top:0"><path d="M0,0 H4 Q1,1 0,3 Z M1439,834 H1434 Q1438,833 1439,830 Z" fill="#000"/></svg>
<div class="a" style="left:184px;top:139px;width:9px;height:695px;background:linear-gradient(90deg,rgba(0,0,0,0.03),rgba(0,0,0,0))"></div>
<div class="a" style="left:0;top:139px;width:1439px;height:11px;background:linear-gradient(180deg,rgba(0,0,0,0.04),rgba(0,0,0,0))"></div>
</body></html>
